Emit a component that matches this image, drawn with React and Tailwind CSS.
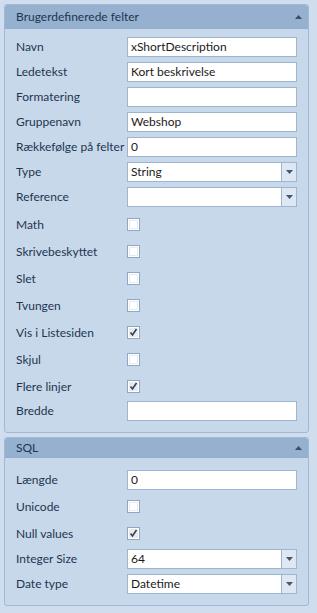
import React from "react";

const font = { fontFamily: 'Lato, "Open Sans", sans-serif' };

function TextRow({ label, value, h = "h-[25px]" }) {
  return (
    <div className={`flex items-start ${h}`}>
      <div className="w-[111px] h-[20px] leading-[20px] whitespace-nowrap">{label}</div>
      <div className="w-[170px] h-[20px] bg-white border border-[#9eb5d2] leading-[18px] pl-[3px] text-[#1b1b1b]">
        {value}
      </div>
    </div>
  );
}

function Arrow() {
  return (
    <svg width="7" height="4" viewBox="0 0 7 4">
      <path d="M0 0 H7 L3.5 4 Z" fill="#4a5568" />
    </svg>
  );
}

function SelectRow({ label, value, h = "h-[25px]", mt = "" }) {
  return (
    <div className={`flex items-start ${h}`}>
      <div className={`w-[111px] h-[20px] leading-[20px] whitespace-nowrap ${mt}`}>{label}</div>
      <div className={`w-[170px] h-[20px] bg-white border border-[#9eb5d2] flex ${mt}`}>
        <div className="flex-1 leading-[18px] pl-[3px] text-[#1b1b1b]">{value}</div>
        <div className="w-[15px] border-l border-[#9eb5d2] bg-[#dde8f4] flex items-center justify-center">
          <Arrow />
        </div>
      </div>
    </div>
  );
}

function CheckRow({ label, checked }) {
  return (
    <div className="flex items-center h-[27px]">
      <div className="w-[111px] leading-[20px] whitespace-nowrap">{label}</div>
      <div className="w-[13px] h-[13px] border border-[#8fa6c6] bg-white p-px">
        <div className={`w-full h-full flex items-center justify-center ${checked ? "bg-[#e6ebf2]" : "bg-white border border-[#e4ebf4]"}`}>
          {checked && (
            <svg width="9" height="9" viewBox="0 0 9 9">
              <path d="M1.5 4.5 L3.5 7 L7.5 1" fill="none" stroke="#3a3f48" strokeWidth="1.6" />
            </svg>
          )}
        </div>
      </div>
    </div>
  );
}

function Header({ title, h }) {
  return (
    <div className={`${h} bg-[#95b1cf] rounded-t-[3px] flex items-center justify-between pl-[11px] pr-[6px] border-b border-[#91aecd]`}>
      <span>{title}</span>
      <svg width="7" height="4" viewBox="0 0 7 4">
        <path d="M0 4 H7 L3.5 0 Z" fill="#3f4c5e" />
      </svg>
    </div>
  );
}

export default function App() {
  return (
    <div className="w-[317px] h-[613px] bg-[#cfddee] pt-[4px] pl-[4px] text-[12px] text-[#1e3550]" style={font}>
      <div className="w-[305px] border border-[#a3b8d3] rounded-[3px] bg-[#c8d8eb]">
        <Header title="Brugerdefinerede felter" h="h-[24px]" />
        <div className="pt-[8px] pl-[11px] pb-[11px]">
          <TextRow label="Navn" value="xShortDescription" />
          <TextRow label="Ledetekst" value="Kort beskrivelse" />
          <TextRow label="Formatering" value="" />
          <TextRow label="Gruppenavn" value="Webshop" />
          <TextRow label="Rækkefølge på felter" value="0" />
          <SelectRow label="Type" value="String" />
          <SelectRow label="Reference" value="" h="h-[24px]" />
          <CheckRow label="Math" />
          <CheckRow label="Skrivebeskyttet" />
          <CheckRow label="Slet" />
          <CheckRow label="Tvungen" />
          <CheckRow label="Vis i Listesiden" checked />
          <CheckRow label="Skjul" />
          <CheckRow label="Flere linjer" checked />
          <div className="pt-px">
            <TextRow label="Bredde" value="" h="h-[20px]" />
          </div>
        </div>
      </div>
      <div className="mt-[4px] w-[305px] border border-[#a3b8d3] rounded-[3px] bg-[#c8d8eb]">
        <Header title="SQL" h="h-[20px]" />
        <div className="pt-[12px] pl-[11px] pb-[11px]">
          <TextRow label="Længde" value="0" h="h-[23px]" />
          <CheckRow label="Unicode" />
          <CheckRow label="Null values" checked />
          <SelectRow label="Integer Size" value="64" h="h-[27px]" mt="mt-[2px]" />
          <SelectRow label="Date type" value="Datetime" h="h-[20px]" />
        </div>
      </div>
    </div>
  );
}
